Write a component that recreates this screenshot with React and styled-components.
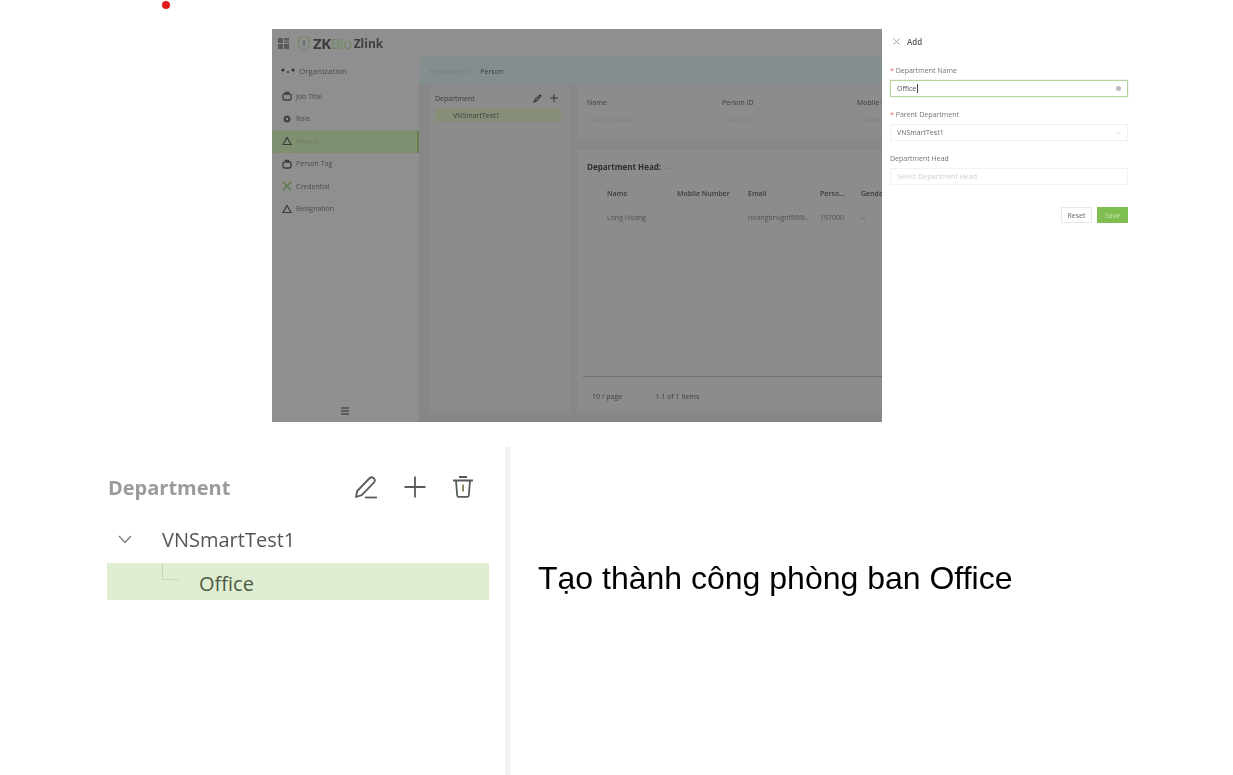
import React from 'react'
import styled, { createGlobalStyle } from 'styled-components'

const GlobalStyle = createGlobalStyle`
    html, body {
        margin: 0;
        padding: 0;
        background: #fff;
        overflow: hidden;
    }
    body {
        font-family: "Open Sans", "Liberation Sans", sans-serif;
    }
`

const menuItems = [
    { label: 'Job Title', icon: 'bag' },
    { label: 'Role', icon: 'gear' },
    { label: 'Person', icon: 'tri', active: true },
    { label: 'Person Tag', icon: 'bag' },
    { label: 'Credential', icon: 'cross' },
    { label: 'Resignation', icon: 'tri' },
]

function MenuIcon({ type }) {
    if (type === 'cross') {
        return (
            <svg width="10" height="10" viewBox="0 0 10 10" fill="none" stroke="#5f7a4a" strokeWidth="1.6">
                <path d="M1 1l8 8M9 1L1 9" />
            </svg>
        )
    }
    if (type === 'tri') {
        return (
            <svg width="10" height="10" viewBox="0 0 10 10" fill="none" stroke="#3c3c3c" strokeWidth="1.2">
                <path d="M5 1.5L9 8.5H1z" />
            </svg>
        )
    }
    if (type === 'gear') {
        return (
            <svg width="10" height="10" viewBox="0 0 10 10" fill="#444">
                <path d="M5 1.5a3.5 3.5 0 1 0 0 7 3.5 3.5 0 0 0 0-7zm0 2.3a1.2 1.2 0 1 1 0 2.4 1.2 1.2 0 0 1 0-2.4z" />
            </svg>
        )
    }
    return (
        <svg width="10" height="10" viewBox="0 0 10 10" fill="none" stroke="#3c3c3c" strokeWidth="1.3">
            <rect x="1" y="3" width="8" height="6" rx="1.5" />
            <path d="M3.5 3V1.5h3V3" />
        </svg>
    )
}

function App() {
    return (
        <Page>
            <GlobalStyle />
            <RedDot />
            <TopRow>
                <Dimmed>
                    <AppHeader>
                        <svg width="11" height="11" viewBox="0 0 11 11" fill="#5a5a5a">
                            <path d="M0 0h5v5H0zM6 0h5v2.5H6zM6 3.5h5V5H6zM0 6h5v5H0zM6 6h5v5H6z" />
                        </svg>
                        <LogoMark>
                            <svg width="14" height="17" viewBox="0 0 14 17" fill="none" stroke="#6f8a5f" strokeWidth="1">
                                <path d="M7 1l5.5 2v6c0 3-2.5 5.5-5.5 7-3-1.5-5.5-4-5.5-7V3z" />
                                <path d="M7 5v6" stroke="#555" />
                            </svg>
                            <LogoStrong>ZK</LogoStrong><LogoGreen>Bio</LogoGreen>
                        </LogoMark>
                        <LogoName>Zlink</LogoName>
                    </AppHeader>
                    <AppBody>
                        <Sidebar>
                            <OrgRow>
                                <svg width="14" height="6" viewBox="0 0 14 6" fill="#333">
                                    <circle cx="2" cy="3" r="1.6" />
                                    <circle cx="7" cy="5" r="1" />
                                    <circle cx="12" cy="3" r="1.6" />
                                </svg>
                                <span>Organization</span>
                            </OrgRow>
                            {menuItems.map(item => (
                                <MenuRow key={item.label} $active={item.active}>
                                    <MenuIcon type={item.icon} />
                                    <MenuLabel $active={item.active}>{item.label}</MenuLabel>
                                </MenuRow>
                            ))}
                            <Collapse>
                                <svg width="8" height="8" viewBox="0 0 8 8" stroke="#2e2e2e" strokeWidth="1.2">
                                    <path d="M0 1h8M0 4h8M0 7h8" />
                                </svg>
                            </Collapse>
                        </Sidebar>
                        <Main>
                            <Breadcrumb>
                                <CrumbFaint>Department</CrumbFaint>
                                <CrumbFaint>/</CrumbFaint>
                                <span>Person</span>
                            </Breadcrumb>
                            <Panels>
                                <TreePanel>
                                    <TreeHead>
                                        <span>Department</span>
                                        <TreeTools>
                                            <svg width="9" height="9" viewBox="0 0 9 9" fill="none" stroke="#333" strokeWidth="1.1">
                                                <path d="M1 8l1-2.5L7 1l1 1-4.5 5z" />
                                            </svg>
                                            <svg width="8" height="8" viewBox="0 0 8 8" fill="none" stroke="#333" strokeWidth="1">
                                                <path d="M4 0v8M0 4h8" />
                                            </svg>
                                        </TreeTools>
                                    </TreeHead>
                                    <TreeActive>VNSmartTest1</TreeActive>
                                </TreePanel>
                                <RightColumn>
                                    <FilterCard>
                                        <FilterField>
                                            <span>Name</span>
                                            <FilterHint>Person Name</FilterHint>
                                        </FilterField>
                                        <FilterField>
                                            <span>Person ID</span>
                                            <FilterHint>Person ID</FilterHint>
                                        </FilterField>
                                        <FilterField>
                                            <span>Mobile Number</span>
                                            <FilterHint>Mobile</FilterHint>
                                        </FilterField>
                                    </FilterCard>
                                    <TableCard>
                                        <HeadLine>Department Head: <HeadDash>---</HeadDash></HeadLine>
                                        <TableHeader>
                                            <ColName>Name</ColName>
                                            <ColMobile>Mobile Number</ColMobile>
                                            <ColEmail>Email</ColEmail>
                                            <ColPerson>Perso...</ColPerson>
                                            <span>Gender</span>
                                        </TableHeader>
                                        <TableRow>
                                            <ColName>Long Hoang</ColName>
                                            <ColMobile />
                                            <ColEmail>hoangbnvgnf868i...</ColEmail>
                                            <ColPerson>197000</ColPerson>
                                            <span>--</span>
                                        </TableRow>
                                        <Pager>
                                            <span>10 / page</span>
                                            <span>1-1 of 1 items</span>
                                        </Pager>
                                    </TableCard>
                                </RightColumn>
                            </Panels>
                        </Main>
                    </AppBody>
                </Dimmed>
                <Drawer>
                    <DrawerTitle>
                        <svg width="7" height="7" viewBox="0 0 7 7" stroke="#999" strokeWidth="0.9">
                            <path d="M0.5 0.5l6 6M6.5 0.5l-6 6" />
                        </svg>
                        <span>Add</span>
                    </DrawerTitle>
                    <FieldLabel $required>Department Name</FieldLabel>
                    <NameInput>
                        <TypedValue>Office</TypedValue>
                        <ClearDot />
                    </NameInput>
                    <FieldLabel $required>Parent Department</FieldLabel>
                    <SelectBox>
                        <span>VNSmartTest1</span>
                        <svg width="6" height="4" viewBox="0 0 6 4" fill="none" stroke="#d5d5d5" strokeWidth="0.8">
                            <path d="M0.5 0.5L3 3l2.5-2.5" />
                        </svg>
                    </SelectBox>
                    <FieldLabel>Department Head</FieldLabel>
                    <SelectBox $hint>
                        <span>Select Department Head</span>
                    </SelectBox>
                    <DrawerActions>
                        <ResetButton>Reset</ResetButton>
                        <SaveButton>Save</SaveButton>
                    </DrawerActions>
                </Drawer>
            </TopRow>
            <BottomRow>
                <DeptPanel>
                    <DeptHead>
                        <DeptTitle>Department</DeptTitle>
                        <DeptTools>
                            <svg width="26" height="26" viewBox="0 0 26 26" fill="none" stroke="#5a5a5a" strokeWidth="1.8" strokeLinejoin="round">
                                <path d="M3 23l1.2-6L16.8 4a2.6 2.6 0 0 1 3.7 0l.6.6a2.6 2.6 0 0 1 0 3.7L8.7 21.2z" />
                                <path d="M12 23.5h12" />
                            </svg>
                            <svg width="24" height="24" viewBox="0 0 24 24" fill="none" stroke="#5a5a5a" strokeWidth="1.8">
                                <path d="M12 1.5v21M1.5 12h21" />
                            </svg>
                            <svg width="24" height="24" viewBox="0 0 24 24" fill="none" stroke="#5a5a5a" strokeWidth="1.8">
                                <path d="M2 5.5h20M8 2h8" />
                                <path d="M5 5.5l1.2 15a1.5 1.5 0 0 0 1.5 1.4h8.6a1.5 1.5 0 0 0 1.5-1.4L19 5.5" />
                                <path d="M12 9.5v7" stroke="#8a7a5a" />
                            </svg>
                        </DeptTools>
                    </DeptHead>
                    <ParentRow>
                        <svg width="14" height="9" viewBox="0 0 14 9" fill="none" stroke="#777" strokeWidth="1.2">
                            <path d="M1 1l6 6.5L13 1" />
                        </svg>
                        <span>VNSmartTest1</span>
                    </ParentRow>
                    <ChildRow>
                        <TreeLine />
                        <span>Office</span>
                    </ChildRow>
                </DeptPanel>
                <Caption>
                    <CaptionText>Tạo thành công phòng ban Office</CaptionText>
                </Caption>
            </BottomRow>
        </Page>
    )
}

const Page = styled.div`
    position: relative;
    width: 1233px;
    height: 775px;
    overflow: hidden;
    background: #fff;
    padding-top: 29px;
    box-sizing: border-box;
`

const RedDot = styled.div`
    position: absolute;
    left: 162px;
    top: 1px;
    width: 8px;
    height: 8px;
    border-radius: 50%;
    background: #e31b1b;
`

const TopRow = styled.div`
    display: flex;
    margin-left: 272px;
    height: 393px;
`

const Dimmed = styled.div`
    width: 610px;
    height: 393px;
    flex: none;
    display: flex;
    flex-direction: column;
    overflow: hidden;
    background: #8d8d8d;
    color: #3d3d3d;
    font-size: 7px;
    filter: blur(0.6px);
`

const AppHeader = styled.div`
    height: 28px;
    flex: none;
    display: flex;
    align-items: center;
    padding-left: 6px;
    gap: 8px;
    background: #8f8f8f;
`

const LogoMark = styled.div`
    display: flex;
    align-items: center;
    font-size: 15px;
    letter-spacing: -0.5px;
    margin-right: -6px;
`

const LogoStrong = styled.span`
    font-weight: 700;
    color: #3b3b3b;
    margin-left: 2px;
`

const LogoGreen = styled.span`
    color: #6f8a5f;
`

const LogoName = styled.span`
    font-size: 12px;
    font-weight: 700;
    color: #404040;
`

const AppBody = styled.div`
    flex: 1;
    display: flex;
    min-height: 0;
`

const Sidebar = styled.div`
    width: 147px;
    flex: none;
    display: flex;
    flex-direction: column;
    background: #8f8f8f;
    position: relative;
    padding-top: 2px;
    box-sizing: border-box;
`

const OrgRow = styled.div`
    height: 22.5px;
    display: flex;
    align-items: center;
    gap: 4px;
    padding-left: 9px;
    margin-bottom: 3.5px;
    font-size: 8px;
    color: #4c4c4c;
`

const MenuRow = styled.div`
    height: 22.5px;
    display: flex;
    align-items: center;
    gap: 4px;
    padding-left: 10px;
    box-sizing: border-box;
    background: ${p => (p.$active ? '#7f8f72' : 'transparent')};
    border-right: 2px solid ${p => (p.$active ? '#667f52' : 'transparent')};
`

const MenuLabel = styled.span`
    color: ${p => (p.$active ? '#6e7c62' : '#4c4c4c')};
`

const Collapse = styled.div`
    position: absolute;
    bottom: 7px;
    left: 69px;
    display: flex;
`

const Main = styled.div`
    flex: 1;
    min-width: 0;
    display: flex;
    flex-direction: column;
    background: #878787;
`

const Breadcrumb = styled.div`
    height: 28px;
    flex: none;
    display: flex;
    align-items: center;
    gap: 4px;
    padding-left: 11px;
    background: #848e8e;
`

const CrumbFaint = styled.span`
    color: #767e7e;
`

const Panels = styled.div`
    flex: 1;
    display: flex;
    gap: 7px;
    padding: 0 0 10px 11px;
    min-height: 0;
`

const TreePanel = styled.div`
    width: 140px;
    flex: none;
    background: #8c8c8c;
    padding: 7px 9px 0 5px;
    box-sizing: border-box;
`

const TreeHead = styled.div`
    display: flex;
    justify-content: space-between;
    align-items: center;
    height: 12px;
    padding-right: 3px;
`

const TreeTools = styled.div`
    display: flex;
    gap: 8px;
`

const TreeActive = styled.div`
    height: 14px;
    margin-top: 4px;
    display: flex;
    align-items: center;
    padding-left: 18px;
    background: #868e78;
`

const RightColumn = styled.div`
    flex: 1;
    min-width: 0;
    display: flex;
    flex-direction: column;
    gap: 10px;
`

const FilterCard = styled.div`
    height: 55px;
    flex: none;
    display: flex;
    padding: 13px 0 0 10px;
    box-sizing: border-box;
    background: #8c8c8c;
`

const FilterField = styled.div`
    width: 135px;
    flex: none;
    display: flex;
    flex-direction: column;
    gap: 9px;
`

const FilterHint = styled.span`
    color: #7f7f7f;
    padding-left: 6px;
    font-size: 6px;
`

const TableCard = styled.div`
    flex: 1;
    position: relative;
    background: #8c8c8c;
    padding: 11px 0 0 10px;
    box-sizing: border-box;
    min-height: 0;
`

const HeadLine = styled.div`
    font-size: 8px;
    font-weight: 700;
    color: #2e2e2e;
`

const HeadDash = styled.span`
    font-weight: 400;
    color: #757575;
`

const TableHeader = styled.div`
    display: flex;
    white-space: nowrap;
    height: 24px;
    align-items: center;
    margin-top: 9px;
    padding-left: 20px;
    color: #3b3b3b;
    font-weight: 600;
`

const TableRow = styled(TableHeader)`
    margin-top: 0;
    height: 24px;
    font-weight: 400;
    color: #525252;
`

const ColName = styled.span`
    width: 70px;
    flex: none;
`

const ColMobile = styled.span`
    width: 71px;
    flex: none;
`

const ColEmail = styled.span`
    width: 72px;
    flex: none;
    overflow: hidden;
`

const ColPerson = styled.span`
    width: 41px;
    flex: none;
`

const Pager = styled.div`
    position: absolute;
    left: 6px;
    right: 0;
    bottom: 0;
    height: 32px;
    padding-top: 3px;
    display: flex;
    align-items: center;
    gap: 33px;
    padding-left: 9px;
    border-top: 1px solid #6f6f6f;
    color: #3f3f3f;
`

const Drawer = styled.div`
    width: 246px;
    flex: none;
    padding: 8px 0 0 8px;
    box-sizing: border-box;
    font-size: 7px;
    color: #757575;
    filter: blur(0.5px);
`

const DrawerTitle = styled.div`
    display: flex;
    align-items: center;
    gap: 7px;
    height: 8px;
    margin-left: 3px;
    margin-bottom: 21px;
    font-size: 8px;
    font-weight: 600;
    color: #555;
`

const FieldLabel = styled.div`
    height: 9px;
    line-height: 9px;
    margin-bottom: 5px;
    &::before {
        content: ${p => (p.$required ? "'* '" : 'none')};
        color: #e06060;
    }
`

const NameInput = styled.div`
    width: 238px;
    height: 17px;
    display: flex;
    align-items: center;
    justify-content: space-between;
    padding: 0 6px;
    box-sizing: border-box;
    margin-bottom: 13px;
    border: 1px solid #b6d49c;
    color: #555;
    box-shadow: 0 0 1px #b6d49c;
`

const TypedValue = styled.span`
    border-right: 1px solid #444;
    padding-right: 0.5px;
`

const ClearDot = styled.span`
    width: 5px;
    height: 5px;
    border-radius: 50%;
    background: #bbb;
`

const SelectBox = styled.div`
    width: 238px;
    height: 17px;
    display: flex;
    align-items: center;
    justify-content: space-between;
    padding: 0 6px;
    box-sizing: border-box;
    margin-bottom: 13px;
    border: 1px solid #f2f2f2;
    color: ${p => (p.$hint ? '#cfcfcf' : '#666')};
`

const DrawerActions = styled.div`
    width: 238px;
    display: flex;
    justify-content: flex-end;
    gap: 5px;
    margin-top: 22px;
`

const ResetButton = styled.div`
    width: 31px;
    height: 16px;
    display: flex;
    align-items: center;
    justify-content: center;
    border: 1px solid #e8e8e8;
    box-sizing: border-box;
    color: #666;
`

const SaveButton = styled(ResetButton)`
    border: none;
    background: #7fbe50;
    color: #c5e2ac;
`

const BottomRow = styled.div`
    display: flex;
    height: 353px;
    margin-top: 25px;
`

const DeptPanel = styled.div`
    flex: none;
    width: 510px;
    padding: 25px 0 0 107px;
    box-sizing: border-box;
    border-right: 5px solid #f1f1f1;
    font-family: "Open Sans", "Noto Sans", sans-serif;
    filter: blur(0.4px);
`

const DeptHead = styled.div`
    width: 368px;
    height: 30px;
    display: flex;
    align-items: center;
    justify-content: space-between;
`

const DeptTitle = styled.span`
    font-size: 20px;
    font-weight: 700;
    color: #9a9a9a;
    margin-left: 1px;
`

const DeptTools = styled.div`
    display: flex;
    align-items: center;
    gap: 24px;
`

const ParentRow = styled.div`
    height: 44px;
    display: flex;
    align-items: center;
    gap: 30px;
    padding-left: 11px;
    font-size: 20px;
    color: #555;
    margin-top: 15px;
`

const ChildRow = styled.div`
    position: relative;
    width: 382px;
    height: 37px;
    display: flex;
    align-items: center;
    padding: 3px 0 0 92px;
    box-sizing: border-box;
    background: #dfeed0;
    font-size: 20px;
    color: #4d5a48;
    margin-top: 2px;
`

const TreeLine = styled.div`
    position: absolute;
    left: 55px;
    top: 0;
    width: 16px;
    height: 16px;
    border-left: 1px solid #c9d6bd;
    border-bottom: 1px solid #c9d6bd;
`

const Caption = styled.div`
    flex: 1;
    padding: 111px 0 0 28px;
`

const CaptionText = styled.div`
    font-family: "Liberation Sans", Arial, sans-serif;
    font-size: 32px;
    line-height: 40px;
    color: #000;
    white-space: nowrap;
    filter: blur(0.3px);
`

export default App
